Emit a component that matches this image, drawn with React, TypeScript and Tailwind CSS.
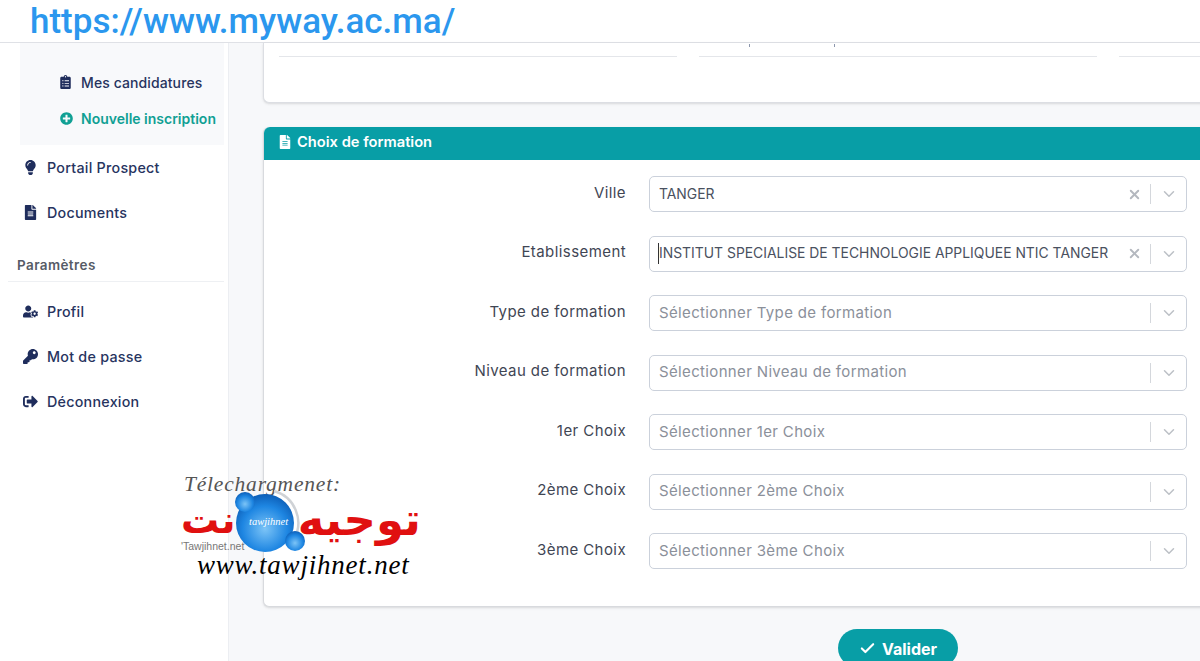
import { FaClipboardList, FaFileAlt, FaKey, FaLightbulb, FaPlusCircle, FaSignOutAlt, FaUserCog } from 'react-icons/fa'
import { FiCheck, FiChevronDown, FiX } from 'react-icons/fi'

const fields = [
  { label: 'Ville', value: 'TANGER' },
  { label: 'Etablissement', value: 'INSTITUT SPECIALISE DE TECHNOLOGIE APPLIQUEE NTIC TANGER', focus: true },
  { label: 'Type de formation', placeholder: 'Sélectionner Type de formation' },
  { label: 'Niveau de formation', placeholder: 'Sélectionner Niveau de formation' },
  { label: '1er Choix', placeholder: 'Sélectionner 1er Choix' },
  { label: '2ème Choix', placeholder: 'Sélectionner 2ème Choix' },
  { label: '3ème Choix', placeholder: 'Sélectionner 3ème Choix' },
]

const mainLinks = [
  { label: 'Portail Prospect', icon: FaLightbulb },
  { label: 'Documents', icon: FaFileAlt },
]

const settingsLinks = [
  { label: 'Profil', icon: FaUserCog },
  { label: 'Mot de passe', icon: FaKey },
  { label: 'Déconnexion', icon: FaSignOutAlt },
]

function NavLink({ label, icon: Icon }: { label: string; icon: typeof FaKey }) {
  return (
    <div className="flex h-[45px] items-center pl-[23px] text-[14.3px] font-medium tracking-[0.25px] text-[#27345f]">
      <span className="flex w-[24px] items-center">
        <Icon className="text-[15px] text-[#1f2d5c]" />
      </span>
      {label}
    </div>
  )
}

function SelectField({ label, value, placeholder, focus }: { label: string; value?: string; placeholder?: string; focus?: boolean }) {
  return (
    <div className="flex h-[36px] items-center">
      <div className="w-[362px] pb-[2px] text-right text-[15px] tracking-[0.42px] text-[#3f4654]">{label}</div>
      <div className="ml-[23px] flex h-full w-[538px] items-center rounded-[5px] border border-[#cbd1db] bg-white pl-[9px]">
        <div className={`flex-1 truncate ${value ? 'text-[13.9px] text-[#4a5160]' : 'text-[15px] tracking-[0.35px] text-[#8b909a]'} ${focus ? 'border-l border-[#333] -ml-px' : ''}`}>
          {value ?? placeholder}
        </div>
        {value && <FiX className="mr-[8px] text-[15px] text-[#b4b8bf]" strokeWidth={3} />}
        <div className="h-[20px] w-px bg-[#d4d7dc]" />
        <div className="flex w-[35px] justify-center">
          <FiChevronDown className="text-[18px] text-[#bcc0c6]" />
        </div>
      </div>
    </div>
  )
}

function Watermark() {
  return (
    <div className="absolute left-[170px] top-[465px] h-[120px] w-[260px]">
      <div className="absolute left-[14px] top-[9px] font-['Liberation_Serif',serif] text-[21.5px] italic leading-none tracking-[0.8px] text-[#555]">Télechargmenet:</div>
      <div dir="rtl" className="absolute left-[11px] top-[34px] flex h-[42px] w-[240px] items-center justify-between font-['DejaVu_Sans',sans-serif] font-bold leading-[42px] text-[#e01010]">
        <span className="text-[45px]">توجيه</span>
        <span className="text-[38px]">نت</span>
      </div>
      <div className="absolute left-[11px] top-[76px] font-['Liberation_Sans',sans-serif] text-[10.5px] leading-none text-[#777]">'Tawjihnet.net</div>
      <svg className="absolute left-[60px] top-[24px]" width="80" height="70" viewBox="0 0 80 70">
        <defs>
          <radialGradient id="ball" cx="50%" cy="60%" r="60%">
            <stop offset="0%" stopColor="#7cc4f7" />
            <stop offset="65%" stopColor="#1e86e2" />
            <stop offset="100%" stopColor="#0d5fb8" />
          </radialGradient>
        </defs>
        <path d="M44 2 A33 33 0 0 1 64 50" fill="none" stroke="#cfd2d6" strokeWidth="2.5" />
        <circle cx="35" cy="34" r="29" fill="url(#ball)" />
        <circle cx="15" cy="13" r="10" fill="url(#ball)" />
        <circle cx="65" cy="52" r="10" fill="url(#ball)" />
      </svg>
      <div className="absolute left-[79px] top-[52px] font-['Liberation_Serif',serif] text-[10.5px] italic leading-none text-white">tawjihnet</div>
      <div className="absolute left-[27px] top-[87px] font-['Liberation_Serif',serif] text-[27px] italic leading-none tracking-[0.8px] text-black">www.tawjihnet.net</div>
    </div>
  )
}

export default function App() {
  return (
    <div className="relative flex h-[661px] w-[1200px] flex-col overflow-hidden bg-white font-['Inter',sans-serif]">
      <header className="flex h-[43px] shrink-0 items-center border-b border-[#dfe1e6] pl-[30px]">
        <span className="font-['Roboto',sans-serif] text-[35px] font-medium leading-none text-[#2b97ee]">https://www.myway.ac.ma/</span>
      </header>

      <div className="flex flex-1">
        <aside className="w-[229px] shrink-0 border-r border-[#eceef2] bg-white">
          <div className="ml-[20px] mr-[4px] h-[102px] bg-[#f8f9fb] pl-[40px] pt-[21px] text-[14px] font-medium">
            <div className="flex h-[36px] items-center tracking-[0.1px] text-[#27345f]">
              <FaClipboardList className="mr-[10px] w-[11px] text-[14px] text-[#1f2d5c]" />
              Mes candidatures
            </div>
            <div className="flex h-[36px] items-center font-semibold text-[#10a094]">
              <FaPlusCircle className="mr-[8px] text-[13px]" />
              Nouvelle inscription
            </div>
          </div>
          {mainLinks.map((link) => (
            <NavLink key={link.label} {...link} />
          ))}
          <div className="ml-[8px] mr-[4px] mt-[20px] border-b border-[#eef0f3] pb-[6px] pl-[9px] text-[13.5px] font-semibold tracking-[0.4px] text-[#565b66]">Paramètres</div>
          <div className="pt-[7px]">
            {settingsLinks.map((link) => (
              <NavLink key={link.label} {...link} />
            ))}
          </div>
        </aside>

        <main className="flex-1 bg-[#f7f8fa] pl-[34px]">
          <section className="relative h-[60px] rounded-bl-[6px] border-b border-l border-[#dcdee3] bg-white pl-[15px] shadow-sm">
            <div className="absolute left-[485px] top-[1px] h-[3px] w-px bg-[#8d97ad]" />
            <div className="absolute left-[570px] top-[1px] h-[3px] w-px bg-[#8d97ad]" />
            <div className="flex gap-[22px] pt-[13px]">
              <div className="w-[398px] border-b border-[#e4e6ea]" />
              <div className="w-[398px] border-b border-[#e4e6ea]" />
              <div className="w-[100px] border-b border-[#e4e6ea]" />
            </div>
          </section>

          <section className="mt-[24px] h-[480px] rounded-l-[6px] border-b border-l border-[#d8dade] bg-white shadow-sm">
            <div className="flex h-[33px] items-center rounded-tl-[6px] bg-[#089ea6] pb-[3px] pl-[14px] text-[14.7px] font-semibold text-white">
              <FaFileAlt className="mr-[5px] text-[14px]" />
              Choix de formation
            </div>
            <div className="flex flex-col gap-[23.5px] pt-[16px]">
              {fields.map((field) => (
                <SelectField key={field.label} {...field} />
              ))}
            </div>
          </section>

          <div className="mt-[22px] flex justify-center pl-[314px]">
            <div className="flex h-[38px] w-[120px] items-start justify-center gap-[6px] rounded-full bg-[#089ea6] pt-[8px] text-[16px] font-bold text-white">
              <FiCheck className="mt-[3px] text-[17px]" strokeWidth={3} />
              Valider
            </div>
          </div>
        </main>
      </div>

      <Watermark />
    </div>
  )
}
